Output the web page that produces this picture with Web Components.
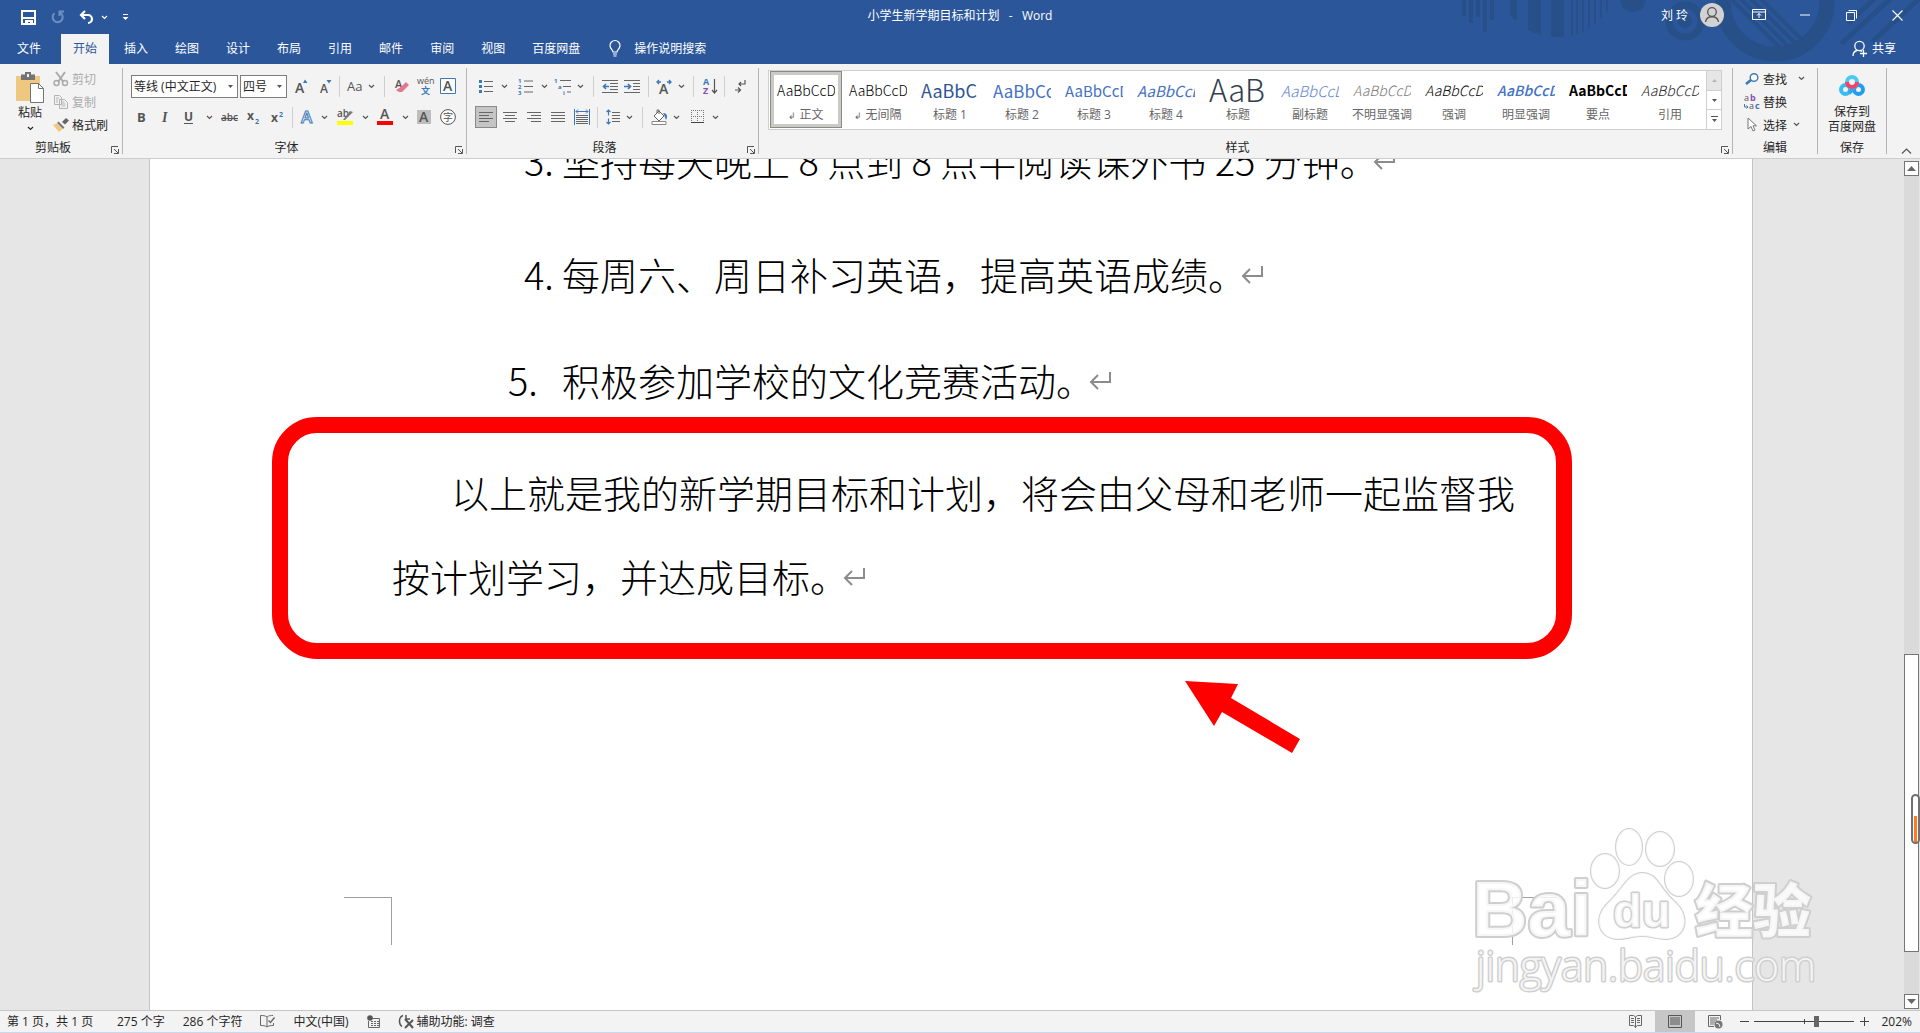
<!DOCTYPE html>
<html lang="zh-CN">
<head>
<meta charset="utf-8">
<title>小学生新学期目标和计划 - Word</title>
<style>
    html, body {
        margin: 0;
        height: 100%;
        overflow: hidden;
    }
    body {
        font-family: "Open Sans", "Noto Sans CJK SC", sans-serif;
        font-size: 12px;
        color: #262626;
    }
</style>
</head>
<body>
<word-app></word-app>

<script>
// every icon is [width, height, svg body]
const ICONS = {
    chev: [7, 5, '<path d="M1 1l2.500 2.500L6 1" fill="none" stroke="currentColor" stroke-width="1.200"/>'],
    save: [15, 15, '<path d="M1 1h13v13H1z" fill="none" stroke="#fff" stroke-width="2"/><path d="M1 7h13v2H1zM4 10h8v5H9v-3H7v3H4z" fill="#fff"/>'],
    redo: [14, 14, '<path d="M8.500 2.500a5 5 0 1 1-5 .8M8.500 6V1.500H13" fill="none" stroke="#6f8fc2" stroke-width="2"/>'],
    undo: [15, 14, '<path d="M6 1L2 5l4 4M2 5h7a4 4 0 0 1 0 8" fill="none" stroke="#fff" stroke-width="2.200"/>'],
    custom: [7, 8, '<path d="M1 1.500h5" stroke="#fff"/><path d="M.5 4h6l-3 3z" fill="#fff"/>'],
    avatar: [24, 24, '<circle cx="12" cy="12" r="12" fill="#d2d2d2"/><circle cx="12" cy="9" r="4.300" fill="none" stroke="#555" stroke-width="1.300"/><path d="M5.500 19c1-7 12-7 13 0" fill="none" stroke="#555" stroke-width="1.300"/>'],
    display: [14, 12, '<path d="M.5.500h13v10H.5zM.5 3h13M7 9V4.500M5 6.500l2-2 2 2" fill="none" stroke="#fff"/>'],
    min: [10, 2, '<path d="M0 1h10" stroke="#fff"/>'],
    restore: [11, 11, '<path d="M.5 2.500h8v8h-8zM2.500.5h8v8" fill="none" stroke="#fff"/>'],
    close: [11, 11, '<path d="M.5.500l10 10M10.500.5l-10 10" stroke="#fff" stroke-width="1.100"/>'],
    bulb: [12, 17, '<path d="M4 12c0-2-3-3-3-6.500a5 5 0 0 1 10 0C11 9 8 10 8 12zM4 14h4M4.500 16h3" fill="none" stroke="#fff" stroke-width="1.200"/>'],
    share: [16, 17, '<circle cx="7.500" cy="6" r="4.700" fill="none" stroke="#fff" stroke-width="1.300"/><path d="M1 16c0-3 2-5 4-5.500M8 10.500l2 1M8 13.500h7M11.500 10v7" fill="none" stroke="#fff" stroke-width="1.300"/>'],
    paste: [28, 31, '<path d="M0 4h24v25H0z" fill="#edc87e"/><path d="M5 2.500h4V0h6v2.500h4V8H5z" fill="#737373"/><path d="M11 2h2v3h-2z" fill="#f3f3f3"/><path d="M14.500 11.500h8l5 5v14h-13z" fill="#fff" stroke="#737373"/><path d="M22.500 11.500v5h5" fill="none" stroke="#737373"/>'],
    cut: [16, 16, '<path d="M3 1l7.500 10M12 1L5 11" stroke="#ababab" stroke-width="2"/><circle cx="3.500" cy="12" r="2.500" fill="none" stroke="#ababab" stroke-width="1.500"/><circle cx="12" cy="12" r="2.500" fill="none" stroke="#ababab" stroke-width="1.500"/>'],
    copy: [16, 14, '<path d="M1.500.5h5l2 2v7h-7zM6.500 4.500h5l3 3v6h-8z" fill="#f3f3f3" stroke="#b3b3b3"/><path d="M3 3h3M3 5h2M3 7h2M8.500 7h3M8.500 9h4M8.500 11h4" stroke="#b3b3b3"/>'],
    brush: [16, 14, '<path d="M9 4l4-4 3 2.500-4 4z" fill="#666"/><path d="M5.500 3.500l6 6-1.500 1.500-6-6z" fill="#777"/><path d="M4 5.500L9.500 11 6 14 0 7z" fill="#edc87e"/>'],
    launch: [8, 8, '<path d="M.5 7V.500H7M3 3l4 4M7.500 3v4.500H3" fill="none" stroke="#555"/>'],
    grow: [14, 15, '<text x="0" y="14" class="b" font-size="14" font-weight="600">A</text><path d="M8 4l2-3.500L12.500 4z" fill="#3c78b8"/>'],
    shrink: [14, 15, '<text x="1" y="14" class="b" font-size="12" font-weight="600">A</text><path d="M7.500 1h5L10 4.500z" fill="#3c78b8"/>'],
    aa: [17, 14, '<text x="0" y="12" class="b" font-size="13">Aa</text>'],
    eraser: [16, 16, '<text x="2" y="10" class="b" font-size="11" font-weight="600">A</text><path d="M8 9l5-5 3 3-7 7H6l-3-2z" fill="#e8748e"/>'],
    pinyin: [18, 18, '<text x="1" y="7" class="b" font-size="9">wén</text><text x="5" y="17" font-size="9" font-weight="700" fill="#3c78b8">文</text>'],
    boxA: [16, 16, '<path d="M.5.500h15v15H.5z" fill="#fff" stroke="#3c78b8"/><text x="3" y="13" class="b" font-size="14" font-weight="600">A</text>'],
    bold: [9, 12, '<text x="0" y="11" class="b" font-size="13" font-weight="700">B</text>'],
    ital: [9, 12, '<text x="1" y="11" class="b" font-family="Liberation Serif" font-size="14" font-weight="700" font-style="italic">I</text>'],
    under: [10, 14, '<text x="0" y="11" class="b" font-size="12" font-weight="700">U</text><path d="M0 13.500h9" stroke="#555"/>'],
    strike: [17, 12, '<text x="0" y="10" class="b" font-size="10" font-weight="600">abc</text><path d="M0 7.500h17" stroke="#555"/>'],
    sub: [13, 13, '<text x="0" y="9" class="b" font-size="12" font-weight="700">x</text><text x="8" y="13" font-size="7" font-weight="700" fill="#3c78b8">2</text>'],
    sup: [13, 13, '<text x="0" y="11" class="b" font-size="12" font-weight="700">x</text><text x="8" y="6" font-size="7" font-weight="700" fill="#3c78b8">2</text>'],
    effect: [14, 16, '<text x="1" y="14" font-size="17" font-weight="600" fill="#fff" stroke="#3c78b8" stroke-width="1">A</text>'],
    hilite: [17, 18, '<text x="0" y="9" class="b" font-size="10" font-weight="600">ab</text><path d="M6 12l7-9 3 1-8 8z" fill="#777"/><path d="M0 13h16v4H0z" fill="#ff0"/>'],
    color: [16, 18, '<text x="3" y="11" class="b" font-size="14" font-weight="600">A</text><path d="M0 13h16v4H0z" fill="red"/>'],
    shade: [14, 14, '<path d="M0 0h14v14H0z" fill="#bdbdbd"/><text x="2" y="12" class="b" font-size="14" font-weight="600">A</text>'],
    circle: [16, 16, '<circle cx="8" cy="8" r="7.400" fill="#fff" stroke="#555"/><text x="3" y="12" class="b" font-size="10">字</text>'],
    bullets: [14, 15, '<path d="M5 2.500h9M5 7.500h9M5 12.500h9" stroke="#666"/><path d="M0 1h3v3H0zM0 6h3v3H0zM0 11h3v3H0z" fill="#3c78b8"/>'],
    numbers: [15, 17, '<path d="M6 3h9M6 8.500h9M6 14h9" stroke="#666"/><g font-size="6" font-weight="700" fill="#3c78b8"><text y="5">1</text><text y="11">2</text><text y="17">3</text></g>'],
    levels: [17, 17, '<path d="M6 2.500h11M9 8.500h8M13 14h4" stroke="#666"/><g font-size="6" font-weight="700" fill="#3c78b8"><text y="5">1</text><text x="4" y="11">a</text><text x="9" y="17">i</text></g>'],
    outdent: [16, 13, '<path d="M0 .5h16M8 3.500h8M8 6.500h8M8 9.500h8M0 12.500h16" stroke="#666"/><path d="M7 6.500H2M4 4L1.500 6.500 4 9" fill="none" stroke="#3c78b8" stroke-width="1.600"/>'],
    indent: [16, 13, '<path d="M0 .5h16M9 3.500h7M9 6.500h7M9 9.500h7M0 12.500h16" stroke="#666"/><path d="M0 6.500h6M4 4l2.500 2.500L4 9" fill="none" stroke="#3c78b8" stroke-width="1.600"/>'],
    asian: [16, 14, '<text x="3" y="15" class="b" font-size="14" font-weight="600">A</text><path d="M5 3H1M3 1L1 3l2 2M11 3h4M13 1l2 2-2 2" fill="none" stroke="#3c78b8" stroke-width="1.300"/>'],
    sort: [15, 17, '<text x="0" y="7" font-size="9" font-weight="700" fill="#3c78b8">A</text><text x="0" y="16" font-size="9" font-weight="700" fill="#8a4fb0">Z</text><path d="M11.500 1v14M9 12l2.500 3 2.500-3" fill="none" stroke="#555" stroke-width="1.200"/>'],
    marks: [11, 14, '<path d="M10 1v4H4M6 3L4 5l2 2M0 11h5M3 8.500L5.500 11 3 13.500" fill="none" stroke="#555" stroke-width="1.200"/>'],
    left: [14, 11, '<path d="M0 .5h14M0 3.500h10M0 6.500h14M0 9.500h10" stroke="#666"/>'],
    center: [14, 11, '<path d="M0 .5h14M2 3.500h10M0 6.500h14M2 9.500h10" stroke="#666"/>'],
    right: [14, 11, '<path d="M0 .5h14M4 3.500h10M0 6.500h14M4 9.500h10" stroke="#666"/>'],
    justify: [14, 11, '<path d="M0 .5h14M0 3.500h14M0 6.500h14M0 9.500h14" stroke="#666"/>'],
    distrib: [16, 16, '<path d="M.5 0v16M15.500 0v16M2 2.500h12M4 .5l-2 2 2 2M12 .5l2 2-2 2" fill="none" stroke="#3c78b8"/><path d="M2 6.500h12M2 8.500h12M2 10.500h12M2 12.500h12M2 14.500h12" stroke="#666"/>'],
    spacing: [14, 16, '<path d="M6 3.500h8M6 6.500h8M6 9.500h8M6 12.500h8" stroke="#666"/><path d="M2.500 1v5.500M.5 3l2-2 2 2M2.500 9.500V15M.5 13l2 2 2-2" fill="none" stroke="#3c78b8" stroke-width="1.200"/>'],
    bucket: [17, 16, '<path d="M3 7l5-5 5 5-5 5zM6 4V1h2v4" fill="#fff" stroke="#666"/><path d="M12 4c4 0 5 3 3 7-1-2-1-4-3-7z" fill="#3c78b8"/><path d="M1 12.500h14v3H1z" fill="#fff" stroke="#888"/>'],
    border: [13, 14, '<path d="M.5 0v12M12.500 0v12M6.500 0v12M0 .5h13M0 6.500h13" stroke="#777" stroke-dasharray="1 1"/><path d="M0 12.500h13" stroke="#444"/>'],
    find: [14, 12, '<circle cx="9" cy="4.500" r="3.800" fill="#fff" stroke="#3c78b8" stroke-width="1.400"/><path d="M6 7l-5 4" stroke="#3c78b8" stroke-width="2.600"/>'],
    replace: [16, 16, '<text x="0" y="7" class="b" font-size="9">a</text><text x="6" y="7" font-size="9" font-weight="700" fill="#8a4fb0">b</text><text x="5" y="15" class="b" font-size="9">a</text><text x="11" y="15" font-size="9" font-weight="700" fill="#3c78b8">c</text><path d="M.5 10v3H4M2.500 11.500L4 13l-1.500 1.500" fill="none" stroke="#3c78b8"/>'],
    select: [10, 15, '<path d="M1 1v11l3-2.500 2 4.500 2-1-2-4.200h3.500z" fill="#fff" stroke="#777"/>'],
    cloud: [26, 22, '<g fill="none" stroke-width="4"><circle cx="6.500" cy="14.500" r="4.500" stroke="#38bdf2"/><circle cx="19.500" cy="14.500" r="4.500" stroke="#1f9df0"/><path d="M10 18l7-7" stroke="#2aa8f2"/><circle cx="13" cy="7" r="5" stroke="#4cc9f5"/><path d="M8 7a5 5 0 0 0 10 0" stroke="#f5436a"/></g>'],
    up: [9, 5, '<path d="M0 5l4.500-5L9 5z" fill="currentColor"/>'],
    down: [9, 5, '<path d="M0 0h9L4.500 5z" fill="currentColor"/>'],
    triUp: [5, 3, '<path d="M0 3L2.500 0 5 3z" fill="#b5b5b5"/>'],
    triDown: [5, 3, '<path d="M0 0h5L2.500 3z" fill="#555"/>'],
    more: [7, 7, '<path d="M0 .5h7" stroke="#555"/><path d="M1 3h5L3.500 6z" fill="#555"/>'],
    collapse: [11, 6, '<path d="M1 5.500l4.500-4.500L10 5.500" fill="none" stroke="#555" stroke-width="1.200"/>'],
    proof: [15, 13, '<path d="M7 2C5 .5 3 .5.500.5v10c2.500 0 4.500 0 6.500 1.500V2c1-1 2-1.500 6-1.500M7 12c1-1 3-1.500 6.500-1.500V8" fill="none" stroke="#666"/><path d="M8.500 5.500l2 2 4-5" fill="none" stroke="#666" stroke-width="1.400"/>'],
    macro: [13, 13, '<path d="M3 3.500h9.500v9h-11V6" fill="none" stroke="#666"/><circle cx="3" cy="3" r="2.800" fill="#555"/><path d="M4 6.500h2M7 6.500h2M10 6.500h2M4 8.500h2M7 8.500h2M10 8.500h2M4 10.500h2M7 10.500h2M10 10.500h2" stroke="#666"/>'],
    access: [16, 15, '<path d="M5 1.500C.5 3 .5 10 4 12.500M8 1v4h4" fill="none" stroke="#555" stroke-width="1.500"/><path d="M7 5l8 9M15 6l-8 8" fill="none" stroke="#555" stroke-width="2"/>'],
    book: [13, 13, '<path d="M6.500 2v11M.5.500h4l2 1.500 2-1.500h4v10h-4l-2 1.500-2-1.500h-4z" fill="none" stroke="#666"/><path d="M2 3.500h3M2 5.500h3M2 7.500h3M8 3.500h3M8 5.500h3M8 7.500h3" stroke="#666"/>'],
    print: [14, 13, '<path d="M.5.500h13v12H.5z" fill="none" stroke="#555"/><path d="M2 3h10M2 5h10M2 7h10M2 9h10" stroke="#555"/>'],
    web: [15, 14, '<path d="M12.500 5V.500H.5v11H6" fill="none" stroke="#666"/><path d="M2 3h9M2 5h7M2 7h5M2 9h4" stroke="#666"/><circle cx="10.500" cy="9.500" r="4" fill="#777"/><path d="M8 8l3 1 1 3" fill="none" stroke="#eee"/>'],
    enter: [22, 18, '<path d="M21 1v10H2M9 4L2 11l7 7" fill="none" stroke="#8c8c8c" stroke-width="2"/>']
};

class UiIcon extends HTMLElement {
    connectedCallback() {
        const [w, h, body] = ICONS[this.getAttribute('name')];
        this.attachShadow({ mode: 'open' }).innerHTML = `
          <style>
              :host { display: inline-flex; flex: none; }
              svg { display: block; overflow: visible; font-family: "Open Sans", "Noto Sans CJK SC", sans-serif; }
              .b { fill: #555; }
          </style>
          <svg width="${w}" height="${h}" viewBox="0 0 ${w} ${h}" aria-hidden="true">${body}</svg>`;
    }
}
customElements.define('ui-icon', UiIcon);

// icon button; "w" is the room it takes in its toolbar row
class ToolButton extends HTMLElement {
    connectedCallback() {
        const w = this.getAttribute('w') || 24;
        this.attachShadow({ mode: 'open' }).innerHTML = `
          <style>
              :host { display: flex; flex: none; width: ${w}px; height: 24px; justify-content: center; align-items: center; color: #555; }
              button { display: flex; flex: none; align-items: center; justify-content: center; width: 100%; height: 22px; padding: 0; border: 0; background: none; color: inherit; }
              :host([active]) button { width: 22px; background: #c5c5c5; outline: 1px solid #8a8a8a; outline-offset: -1px; }
          </style>
          <button aria-label="${this.getAttribute('label') || '更多选项'}"><ui-icon name="${this.getAttribute('icon')}"></ui-icon></button>`;
    }
}
customElements.define('tool-button', ToolButton);

class ToolSep extends HTMLElement {
    connectedCallback() {
        this.attachShadow({ mode: 'open' }).innerHTML = `
          <style>
              :host { display: flex; flex: none; justify-content: center; width: ${this.getAttribute('w')}px; height: 21px; }
              i { width: 1px; background: #cfcfcf; }
          </style>
          <i></i>`;
    }
}
customElements.define('tool-sep', ToolSep);

// small icon + caption command
class TextCommand extends HTMLElement {
    connectedCallback() {
        this.attachShadow({ mode: 'open' }).innerHTML = `
          <style>
              :host { display: block; height: 23px; }
              button { display: flex; align-items: center; gap: 3px; height: 21px; padding: 0; border: 0; background: none; font: inherit; color: #262626; white-space: nowrap; }
              .ic { display: flex; justify-content: center; width: 16px; }
              .ch { display: flex; margin-left: 3px; color: #555; }
              :host([menu="wide"]) .ch { margin-left: 8px; }
              :host([disabled]) button { color: #ababab; }
          </style>
          <button ${this.hasAttribute('disabled') ? 'disabled' : ''}>
              <span class="ic"><ui-icon name="${this.getAttribute('icon')}"></ui-icon></span>
              <slot></slot>
              ${this.hasAttribute('menu') ? '<span class="ch"><ui-icon name="chev"></ui-icon></span>' : ''}
          </button>`;
    }
}
customElements.define('text-command', TextCommand);

class ComboBox extends HTMLElement {
    connectedCallback() {
        this.attachShadow({ mode: 'open' }).innerHTML = `
          <style>
              :host { display: flex; flex: none; position: relative; width: ${this.getAttribute('w')}px; }
              select { appearance: none; width: 100%; height: 23px; margin: 0; padding: 0 0 0 2px; border: 1px solid #7d7d7d; border-radius: 0; background: #fff; font: inherit; color: #262626; }
              ui-icon { position: absolute; right: 5px; top: 10px; }
          </style>
          <select aria-label="${this.getAttribute('label')}"><option>${this.getAttribute('value')}</option></select>
          <ui-icon name="triDown"></ui-icon>`;
    }
}
customElements.define('combo-box', ComboBox);

class RibbonGroup extends HTMLElement {
    connectedCallback() {
        this.attachShadow({ mode: 'open' }).innerHTML = `
          <style>
              :host { display: flex; flex-direction: column; flex: none; box-sizing: border-box; height: 86px; border-right: 1px solid #b5b5b5; }
              .body { display: flex; height: 72px; }
              .foot { display: flex; position: relative; justify-content: center; height: 14px; line-height: 16px; }
              :host([launcher]) .foot { padding-right: 16px; }
              .launch { position: absolute; right: 3px; bottom: 0; padding: 0; border: 0; background: none; display: flex; }
          </style>
          <div class="body"><slot></slot></div>
          <div class="foot">${this.getAttribute('label')}
              ${this.hasAttribute('launcher') ? '<button class="launch" aria-label="对话框"><ui-icon name="launch"></ui-icon></button>' : ''}
          </div>`;
    }
}
customElements.define('ribbon-group', RibbonGroup);

class StyleCard extends HTMLElement {
    connectedCallback() {
        this.attachShadow({ mode: 'open' }).innerHTML = `
          <style>
              :host { display: block; flex: none; width: 72px; height: 57px; }
              button { display: flex; flex-direction: column; align-items: center; box-sizing: border-box; width: 100%; height: 57px; padding: 7px 0 0; border: 0; background: #fff; font: inherit; color: #666; }
              :host([selected]) button { box-shadow: inset 0 0 0 1px #8a8a86, inset 0 0 0 4px #cacac6; }
              .preview { width: 58px; height: 25px; line-height: 25px; overflow: hidden; text-align: left; white-space: nowrap; font-family: "Noto Sans CJK SC", sans-serif; font-weight: 300; font-size: 14px; }
              .name { line-height: 18px; margin-top: 3px; white-space: nowrap; }
              .name small { font-size: 9px; }
          </style>
          <button>
              <span class="preview" style="${this.getAttribute('look') || ''}">${this.getAttribute('sample')}</span>
              <span class="name">${this.hasAttribute('para') ? '<small>↲</small> ' : ''}${this.getAttribute('name')}</span>
          </button>`;
    }
}
customElements.define('style-card', StyleCard);

class TitleBar extends HTMLElement {
    connectedCallback() {
        const tabs = ['文件', '开始', '插入', '绘图', '设计', '布局', '引用', '邮件', '审阅', '视图', '百度网盘'];
        this.attachShadow({ mode: 'open' }).innerHTML = `
          <style>
              :host { display: block; position: relative; height: 64px; background: #2b579a; color: #fff; overflow: hidden; }
              .deco { position: absolute; right: 0; top: 0; }
              button { padding: 0; border: 0; background: none; color: inherit; font: inherit; display: flex; align-items: center; justify-content: center; }
              .top { position: relative; display: grid; grid-template-columns: 1fr auto 1fr; height: 34px; }
              .quick { display: flex; align-items: center; padding-left: 14px; }
              .quick button { width: 29px; }
              .quick .nar { width: 6px; }
              .quick .cus { width: 36px; }
              .name { line-height: 32px; white-space: pre; }
              .name i { font-style: normal; margin: 0 3px; }
              .win { display: flex; justify-content: flex-end; height: 30px; align-items: center; }
              .win button { width: 46px; height: 30px; }
              .win .user { width: auto; gap: 12px; margin-right: 12px; }
              .tabs { position: relative; display: flex; height: 30px; align-items: stretch; }
              .tabs a { display: block; padding: 0 12px; margin-right: 3px; line-height: 30px; color: #fff; text-decoration: none; }
              .tabs a:first-child { margin: 0 8px 0 5px; }
              .tabs a.on { background: #f3f3f3; color: #2b579a; }
              .tell { margin-left: 14px; gap: 13px; height: 28px; }
              .share { margin-left: auto; margin-right: 24px; gap: 4px; height: 28px; }
          </style>
          <svg class="deco" width="460" height="64" aria-hidden="true">
              <defs>
                  <clipPath id="disc"><circle cx="97" cy="-25" r="62"/></clipPath>
                  <clipPath id="hole"><circle cx="315" cy="2" r="45"/></clipPath>
              </defs>
              <g fill="#274f88">
                  <path d="M2 0h4v16H2zM9 0h4v23H9zM16 0h4v17h-4zM23 0h4v32h-4zM30 0h4v20h-4z"/>
                  <g clip-path="url(#disc)">
                      <path d="M50 0h7v20h-7zM68 0h13v64H68zM91 0h13v64H91zM111 0h2v64h-2zM116 0h2v64h-2zM122 0h2v64h-2zM128 0h2v64h-2zM134 0h2v64h-2zM140 0h2v64h-2zM146 0h2v64h-2z"/>
                  </g>
                  <circle cx="173" cy="-1" r="13"/>
                  <circle cx="225" cy="21" r="7"/>
              </g>
              <g fill="none" stroke="#274f88">
                  <circle cx="225" cy="21" r="16" stroke-width="7"/>
                  <circle cx="315" cy="2" r="52" stroke-width="15"/>
                  <g clip-path="url(#hole)" stroke-width="4">
                      <path d="M262-10l60 60M272-10l60 60M282-10l60 60M292-10l60 60"/>
                  </g>
                  <path d="M440-10l-59 54M424-10l-36 33M462-4l-50 46" stroke-width="5"/>
              </g>
          </svg>
          <div class="top">
              <div class="quick">
                  <button aria-label="保存"><ui-icon name="save"></ui-icon></button>
                  <button aria-label="重做"><ui-icon name="redo"></ui-icon></button>
                  <button aria-label="撤消"><ui-icon name="undo"></ui-icon></button>
                  <button class="nar" aria-label="撤消列表"><ui-icon name="chev"></ui-icon></button>
                  <button class="cus" aria-label="自定义"><ui-icon name="custom"></ui-icon></button>
              </div>
              <div class="name">小学生新学期目标和计划  <i>-</i>  Word</div>
              <div class="win">
                  <button class="user">刘 玲 <ui-icon name="avatar"></ui-icon></button>
                  <button aria-label="功能区显示选项"><ui-icon name="display"></ui-icon></button>
                  <button aria-label="最小化"><ui-icon name="min"></ui-icon></button>
                  <button aria-label="还原"><ui-icon name="restore"></ui-icon></button>
                  <button aria-label="关闭"><ui-icon name="close"></ui-icon></button>
              </div>
          </div>
          <nav class="tabs">
              ${tabs.map(t => `<a href="#"${t === '开始' ? ' class="on"' : ''}>${t}</a>`).join('')}
              <button class="tell"><ui-icon name="bulb"></ui-icon>操作说明搜索</button>
              <button class="share"><ui-icon name="share"></ui-icon>共享</button>
          </nav>`;
    }
}
customElements.define('title-bar', TitleBar);

class RibbonBar extends HTMLElement {
    connectedCallback() {
        const row = items => items.map(([icon, w, label]) => icon === '|'
            ? `<tool-sep w="${w}"></tool-sep>`
            : `<tool-button icon="${icon}" w="${w}"${label ? ` label="${label}"` : ''}${icon === 'left' ? ' active' : ''}></tool-button>`).join('');
        const styles = [
            ['正文', 'AaBbCcDd', 'color:#000', 'para selected'],
            ['无间隔', 'AaBbCcDd', 'color:#000', 'para'],
            ['标题 1', 'AaBbC', 'color:#2f5496;font-size:18px;font-weight:400'],
            ['标题 2', 'AaBbCc', 'color:#4472c4;font-size:17px;font-weight:400'],
            ['标题 3', 'AaBbCcD', 'color:#4472c4;font-size:15px;font-weight:400'],
            ['标题 4', 'AaBbCcD', 'color:#4472c4;font-size:15px;font-weight:400;font-style:italic'],
            ['标题', 'AaB', 'color:#323e4f;font-size:31px;line-height:21px'],
            ['副标题', 'AaBbCcD', 'color:#5b83cf;font-size:15px;font-style:italic'],
            ['不明显强调', 'AaBbCcDd', 'color:#7a7a7a;font-style:italic'],
            ['强调', 'AaBbCcDd', 'color:#000;font-style:italic'],
            ['明显强调', 'AaBbCcDd', 'color:#4472c4;font-style:italic;font-weight:500'],
            ['要点', 'AaBbCcD', 'color:#000;font-weight:700'],
            ['引用', 'AaBbCcDd', 'color:#262626;font-style:italic']
        ];
        this.attachShadow({ mode: 'open' }).innerHTML = `
          <style>
              :host { display: flex; box-sizing: border-box; height: 95px; padding-top: 4px; background: #f3f3f3; border-bottom: 1px solid #cdcdcd; }
              .paste { display: flex; flex-direction: column; align-items: center; width: 46px; margin-left: 7px; padding: 4px 0 0; border: 0; background: none; font: inherit; color: #262626; }
              .paste span { line-height: 20px; margin-bottom: 3px; }
              .rows { padding-top: 6px; }
              .row { display: flex; align-items: center; height: 24px; margin-bottom: 7px; }
              .font .row:first-child { padding-left: 2px; }
              combo-box { margin-right: 2px; }
              combo-box + combo-box { margin: 0; }
              .styles { flex: 1; }
              .gallery { display: flex; flex: 1; box-sizing: border-box; height: 60px; margin: 2px 10px 0 9px; border: 1px solid #cfcfcf; background: #fff; overflow: hidden; }
              .cards { display: flex; flex: 1; padding: 0 0 0 1px; overflow: hidden; }
              .nav { display: flex; flex-direction: column; flex: none; width: 14px; border-left: 1px solid #cfcfcf; }
              .nav button { flex: 1; display: flex; align-items: center; justify-content: center; padding: 0; border: 0; border-bottom: 1px solid #cfcfcf; background: #fff; }
              .nav button:first-child { background: #e6e6e6; }
              .nav button:last-child { border: 0; }
              .edit { padding-left: 11px; }
              .net { display: flex; flex-direction: column; align-items: center; width: 68px; padding: 7px 0 0; border: 0; background: none; font: inherit; line-height: 15px; color: #262626; }
              .net span { margin-top: 7px; }
              .end { display: flex; flex: none; width: 34px; align-items: flex-end; justify-content: center; padding: 0 0 4px 5px; box-sizing: border-box; border: 0; background: none; }
          </style>
          <ribbon-group label="剪贴板" launcher style="width:123px">
              <button class="paste"><ui-icon name="paste"></ui-icon><span>粘贴</span><ui-icon name="chev"></ui-icon></button>
              <div>
                  <text-command icon="cut" disabled>剪切</text-command>
                  <text-command icon="copy" disabled>复制</text-command>
                  <text-command icon="brush">格式刷</text-command>
              </div>
          </ribbon-group>
          <ribbon-group label="字体" launcher style="width:344px">
              <div class="rows font" style="padding-left:6px">
                  <div class="row">
                      <combo-box label="字体" w="107" value="等线 (中文正文)"></combo-box>
                      <combo-box label="字号" w="47" value="四号"></combo-box>
                      ${row([['grow', 30, '增大字号'], ['shrink', 18, '减小字号'], ['|', 8], ['aa', 24, '更改大小写'], ['chev', 8], ['|', 18], ['eraser', 16, '清除格式'], ['pinyin', 32, '拼音指南'], ['boxA', 14, '字符边框']])}
                  </div>
                  <div class="row">
                      ${row([['bold', 24, '加粗'], ['ital', 24, '倾斜'], ['under', 24, '下划线'], ['chev', 16], ['strike', 24, '删除线'], ['sub', 24, '下标'], ['sup', 24, '上标'], ['|', 6], ['effect', 24, '文本效果'], ['chev', 10], ['hilite', 32, '突出显示'], ['chev', 8], ['color', 32, '字体颜色'], ['chev', 8], ['shade', 30, '字符底纹'], ['circle', 18, '带圈字符']])}
                  </div>
              </div>
          </ribbon-group>
          <ribbon-group label="段落" launcher style="width:292px">
              <div class="rows" style="padding-left:7px">
                  <div class="row">
                      ${row([['bullets', 24, '项目符号'], ['chev', 12], ['numbers', 30, '编号'], ['chev', 8], ['levels', 28, '多级列表'], ['chev', 8], ['|', 18], ['outdent', 16, '减少缩进'], ['indent', 28, '增加缩进'], ['|', 4], ['asian', 28, '中文版式'], ['chev', 6], ['|', 18], ['sort', 16, '排序'], ['|', 12], ['marks', 20, '编辑标记']])}
                  </div>
                  <div class="row">
                      ${row([['left', 24, '左对齐'], ['center', 24, '居中'], ['right', 24, '右对齐'], ['justify', 24, '两端对齐'], ['distrib', 24, '分散对齐'], ['|', 6], ['spacing', 26, '行距'], ['chev', 6], ['|', 20], ['bucket', 14, '底纹'], ['chev', 20], ['border', 22, '边框'], ['chev', 14]])}
                  </div>
              </div>
          </ribbon-group>
          <ribbon-group label="样式" launcher class="styles">
              <div class="gallery">
                  <div class="cards">
                      ${styles.map(([name, sample, look, extra]) => `<style-card name="${name}" sample="${sample}" look="${look}" ${extra || ''}></style-card>`).join('')}
                  </div>
                  <div class="nav">
                      <button aria-label="上一行"><ui-icon name="triUp"></ui-icon></button>
                      <button aria-label="下一行"><ui-icon name="triDown"></ui-icon></button>
                      <button aria-label="其他样式"><ui-icon name="more"></ui-icon></button>
                  </div>
              </div>
          </ribbon-group>
          <ribbon-group label="编辑" style="width:85px">
              <div class="edit">
                  <text-command icon="find" menu="wide">查找</text-command>
                  <text-command icon="replace">替换</text-command>
                  <text-command icon="select" menu>选择</text-command>
              </div>
          </ribbon-group>
          <ribbon-group label="保存" style="width:69px">
              <button class="net"><ui-icon name="cloud"></ui-icon><span>保存到<br>百度网盘</span></button>
          </ribbon-group>
          <button class="end" aria-label="折叠功能区"><ui-icon name="collapse"></ui-icon></button>`;
    }
}
customElements.define('ribbon-bar', RibbonBar);

class SiteMark extends HTMLElement {
    connectedCallback() {
        this.attachShadow({ mode: 'open' }).innerHTML = `
          <style>
              :host { display: block; pointer-events: none; }
              svg { display: block; overflow: visible; }
              g { fill: #fff; fill-opacity: .8; stroke: #cfcfcf; stroke-width: 2; paint-order: stroke; stroke-linejoin: round; }
          </style>
          <svg width="350" height="175">
              <g font-family="Liberation Sans, sans-serif" font-weight="700" style="stroke-width:4">
                  <text x="0" y="116" font-size="77">Bai</text>
                  <text x="223" y="112" font-size="58" font-family="Noto Sans CJK SC, sans-serif" font-weight="900">经验</text>
              </g>
              <g>
                  <ellipse cx="133" cy="51" rx="14" ry="17"/>
                  <ellipse cx="157" cy="27" rx="13" ry="18"/>
                  <ellipse cx="188" cy="29" rx="14" ry="17"/>
                  <ellipse cx="207" cy="59" rx="14" ry="17"/>
                  <path d="M170 53c16 0 17 15 32 28 19 17 10 38-8 38-12 0-14-3-24-3s-14 3-24 3c-19 0-26-21-10-36 14-13 20-30 34-30z"/>
                  <text x="141" y="107" font-family="Liberation Sans, sans-serif" font-size="47" font-weight="700" style="stroke-width:3">du</text>
              </g>
              <g style="stroke-width:3">
                  <text x="4" y="161" font-family="Open Sans, sans-serif" font-size="42">jingyan.baidu.com</text>
              </g>
          </svg>`;
    }
}
customElements.define('site-mark', SiteMark);

class DocPage extends HTMLElement {
    connectedCallback() {
        this.attachShadow({ mode: 'open' }).innerHTML = `
          <style>
              :host { display: flex; flex: 1; justify-content: center; min-width: 0; background: #e6e6e6; overflow: hidden; }
              .page { position: relative; box-sizing: border-box; width: 1604px; background: #fff; border: solid #c3c3c3; border-width: 0 1px; padding: 0 224px 0 242px; font: 300 38px/84px "Noto Sans CJK SC", sans-serif; color: #000; white-space: nowrap; }
              ol { list-style: none; margin: -41px 0 0; padding: 0; }
              li { display: flex; margin: 0 0 30px 132px; }
              li + li { margin-bottom: 22px; }
              li:last-child { margin: 0 0 28px 116px; }
              li b { font-weight: inherit; width: 38px; flex: none; }
              li:last-child b { width: 54px; }
              p { margin: 0; text-indent: 59px; }
              ui-icon { margin-left: -5px; align-self: center; }
              p ui-icon { vertical-align: 7px; }
              .frame { position: absolute; left: 122px; right: 180px; top: 258px; height: 210px; border: 16px solid #f00; border-radius: 45px; }
              .arrow { position: absolute; left: 1035px; top: 522px; }
              .crop { position: absolute; top: 738px; width: 47px; height: 47px; border: solid #a0a0a0; border-width: 1px 1px 0 0; left: 194px; }
              .crop.r { left: auto; right: 192px; border-width: 1px 0 0 1px; }
              site-mark { position: absolute; left: 1322px; top: 661px; }
          </style>
          <div class="page">
              <ol>
                  <li><b>3.</b>坚持每天晚上 8 点到 8 点半阅读课外书 25 分钟。<ui-icon name="enter"></ui-icon></li>
                  <li><b>4.</b>每周六、周日补习英语，提高英语成绩。<ui-icon name="enter"></ui-icon></li>
                  <li><b>5.</b>积极参加学校的文化竞赛活动。<ui-icon name="enter"></ui-icon></li>
              </ol>
              <p>以上就是我的新学期目标和计划，将会由父母和老师一起监督我<br>按计划学习，并达成目标。<ui-icon name="enter"></ui-icon></p>
              <div class="frame"></div>
              <svg class="arrow" width="116" height="73"><path d="M0 0l53 3-7 14 69 41-8 14-70-41-8 14z" fill="#f00"/></svg>
              <div class="crop"></div>
              <div class="crop r"></div>
              <site-mark></site-mark>
          </div>`;
    }
}
customElements.define('doc-page', DocPage);

class SideScroll extends HTMLElement {
    connectedCallback() {
        this.attachShadow({ mode: 'open' }).innerHTML = `
          <style>
              :host { display: flex; position: relative; flex: none; flex-direction: column; width: 15px; padding: 2px 1px 1px 2px; background: #e6e6e6; color: #666; }
              button { display: flex; flex: none; align-items: center; justify-content: center; box-sizing: border-box; height: 15px; padding: 0; border: 1px solid #757575; background: #fff; color: inherit; }
              .track { display: flex; flex: 1; flex-direction: column; background: #dadada; }
              .before { flex: 480; }
              .thumb { flex: 297; box-sizing: border-box; border: 1px solid #757575; background: #fff; }
              .after { flex: 42; }
              .pill { position: absolute; right: 0; top: 635px; box-sizing: border-box; width: 9px; height: 50px; padding: 20px 1px 0; border: 2px solid #707070; border-radius: 5px; background: #fff; }
              .pill i { display: block; height: 26px; background: #ff7a1f; }
          </style>
          <button aria-label="向上滚动"><ui-icon name="up"></ui-icon></button>
          <div class="track"><div class="before"></div><div class="thumb"></div><div class="after"></div></div>
          <button aria-label="向下滚动"><ui-icon name="down"></ui-icon></button>
          <div class="pill"><i></i></div>`;
    }
}
customElements.define('side-scroll', SideScroll);

class StatusBar extends HTMLElement {
    connectedCallback() {
        this.attachShadow({ mode: 'open' }).innerHTML = `
          <style>
              :host { display: flex; align-items: center; box-sizing: border-box; height: 23px; padding: 0 8px 0 7px; background: #f3f3f3; border: solid; border-color: #c6c6c6 #0000 #c9d8ec; border-width: 1px 0; white-space: nowrap; }
              .left { display: flex; align-items: center; gap: 18px; flex: 1; line-height: 18px; }
              .left .pages { min-width: 92px; }
              .left .acc { display: flex; align-items: center; gap: 3px; }
              button { display: flex; align-items: center; justify-content: center; width: 40px; height: 21px; padding: 0; border: 0; background: none; font: inherit; }
              button.on { background: #c6c6c6; }
              .zoom { display: flex; align-items: center; }
              .zoom button { width: 18px; }
              .zoom button::before { content: ""; width: 9px; height: 1px; background: #444; }
              .zoom button.plus::after { content: ""; width: 1px; height: 9px; margin-left: -5px; margin-right: 4px; background: #444; }
              input { appearance: none; width: 100px; height: 11px; margin: 0 1px; background: linear-gradient(#444, #444) 0 5px / 100% 1px no-repeat, linear-gradient(#444, #444) 50% 3px / 1px 5px no-repeat; }
              input::-webkit-slider-thumb { appearance: none; width: 5px; height: 11px; background: #666; }
              output { width: 36px; text-align: right; margin-left: 3px; }
          </style>
          <div class="left">
              <span class="pages">第 1 页，共 1 页</span><span>275 个字</span><span>286 个字符</span>
              <ui-icon name="proof"></ui-icon><span>中文(中国)</span><ui-icon name="macro"></ui-icon>
              <span class="acc"><ui-icon name="access"></ui-icon>辅助功能: 调查</span>
          </div>
          <button aria-label="阅读视图"><ui-icon name="book"></ui-icon></button>
          <button class="on" aria-label="页面视图"><ui-icon name="print"></ui-icon></button>
          <button aria-label="Web 版式视图"><ui-icon name="web"></ui-icon></button>
          <div class="zoom">
              <button aria-label="缩小"></button>
              <input type="range" min="0" max="100" value="63" aria-label="缩放">
              <button class="plus" aria-label="放大"></button>
              <output>202%</output>
          </div>`;
    }
}
customElements.define('status-bar', StatusBar);

class WordApp extends HTMLElement {
    connectedCallback() {
        this.attachShadow({ mode: 'open' }).innerHTML = `
          <style>
              :host { display: flex; flex-direction: column; height: 100vh; }
              main { display: flex; flex: 1; min-height: 0; }
          </style>
          <title-bar></title-bar>
          <ribbon-bar></ribbon-bar>
          <main><doc-page></doc-page><side-scroll></side-scroll></main>
          <status-bar></status-bar>`;
    }
}
customElements.define('word-app', WordApp);
</script>
</body>
</html>
